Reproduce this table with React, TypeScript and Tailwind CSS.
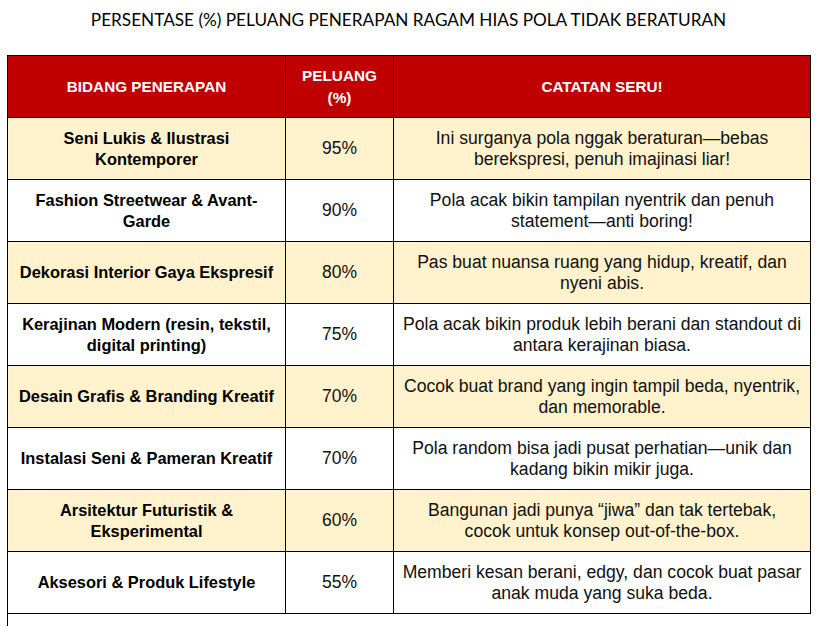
const rows = [
	{
		field: ["Seni Lukis & Ilustrasi", "Kontemporer"],
		pct: "95%",
		note: ["Ini surganya pola nggak beraturan—bebas", "berekspresi, penuh imajinasi liar!"],
	},
	{
		field: ["Fashion Streetwear & Avant-", "Garde"],
		pct: "90%",
		note: ["Pola acak bikin tampilan nyentrik dan penuh", "statement—anti boring!"],
	},
	{
		field: ["Dekorasi Interior Gaya Ekspresif"],
		pct: "80%",
		note: ["Pas buat nuansa ruang yang hidup, kreatif, dan", "nyeni abis."],
	},
	{
		field: ["Kerajinan Modern (resin, tekstil,", "digital printing)"],
		pct: "75%",
		note: ["Pola acak bikin produk lebih berani dan standout di", "antara kerajinan biasa."],
	},
	{
		field: ["Desain Grafis & Branding Kreatif"],
		pct: "70%",
		note: ["Cocok buat brand yang ingin tampil beda, nyentrik,", "dan memorable."],
	},
	{
		field: ["Instalasi Seni & Pameran Kreatif"],
		pct: "70%",
		note: ["Pola random bisa jadi pusat perhatian—unik dan", "kadang bikin mikir juga."],
	},
	{
		field: ["Arsitektur Futuristik &", "Eksperimental"],
		pct: "60%",
		note: ["Bangunan jadi punya “jiwa” dan tak tertebak,", "cocok untuk konsep out-of-the-box."],
	},
	{
		field: ["Aksesori & Produk Lifestyle"],
		pct: "55%",
		note: ["Memberi kesan berani, edgy, dan cocok buat pasar", "anak muda yang suka beda."],
	},
];

const Lines = ({ lines }: { lines: string[] }) => (
	<>
		{lines.map((l) => (
			<span key={l} className="block whitespace-nowrap">
				{l}
			</span>
		))}
	</>
);

export default function App() {
	return (
		<div className="w-[817px] h-[627px] bg-white overflow-hidden font-['Liberation_Sans',Arial,sans-serif] text-[#111]">
			<div className="h-[55px] flex justify-center pt-[8px]">
				<h1 className="font-['Lato',sans-serif] text-[17.2px] text-black leading-[24px]">
					PERSENTASE (%) PELUANG PENERAPAN RAGAM HIAS POLA TIDAK BERATURAN
				</h1>
			</div>

			<table className="ml-[7px] border-collapse table-fixed w-[803px]">
				<colgroup>
					<col className="w-[278px]" />
					<col className="w-[108px]" />
					<col className="w-[417px]" />
				</colgroup>
				<thead>
					<tr className="h-[62px] bg-[#c00000] text-white font-bold text-[15.3px] leading-[22px]">
						<th className="border border-black text-center">BIDANG PENERAPAN</th>
						<th className="border border-black text-center">
							PELUANG
							<br />
							(%)
						</th>
						<th className="border border-black text-center">CATATAN SERU!</th>
					</tr>
				</thead>
				<tbody>
					{rows.map((r, i) => (
						<tr key={i} className={`h-[62px] ${i % 2 === 0 ? "bg-[#fff2cc]" : "bg-white"}`}>
							<td className="border border-black text-center font-bold text-black text-[16.4px] leading-[21px]">
								<Lines lines={r.field} />
							</td>
							<td className="border border-black text-center text-[17.5px]">{r.pct}</td>
							<td className="border border-black text-center text-[17.6px] leading-[21px]">
								<Lines lines={r.note} />
							</td>
						</tr>
					))}
				</tbody>
			</table>
			<div className="ml-[7px] h-[12px] border-l border-black" />
		</div>
	);
}
